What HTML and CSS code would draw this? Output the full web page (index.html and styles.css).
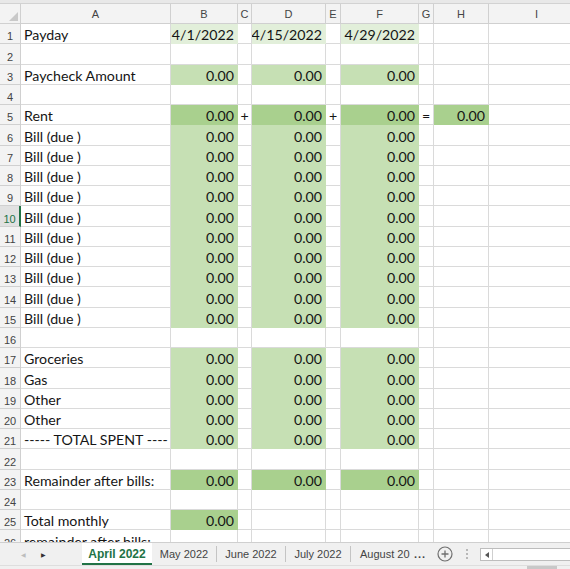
FILE: index.html
```html
<!DOCTYPE html>
<html>
<head>
<meta charset="utf-8">
<link rel="stylesheet" href="styles.css">
</head>
<body>
<div class="topstrip"></div>
<div class="sheet">
  <div class="hd corner"><svg width="9" height="9" viewBox="0 0 9 9"><polygon points="9,0 9,9 0,9" fill="#c9c9c9"/></svg></div>
  <div class="hd">A</div><div class="hd">B</div><div class="hd">C</div><div class="hd">D</div><div class="hd">E</div><div class="hd">F</div><div class="hd">G</div><div class="hd">H</div><div class="hd">I</div>

  <div class="rh">1</div><div class="c">Payday</div><div class="c lg r">4/1/2022</div><div class="c"></div><div class="c lg r">4/15/2022</div><div class="c"></div><div class="c lg r">4/29/2022</div><div class="c"></div><div class="c"></div><div class="c"></div>
  <div class="rh">2</div><div class="c"></div><div class="c"></div><div class="c"></div><div class="c"></div><div class="c"></div><div class="c"></div><div class="c"></div><div class="c"></div><div class="c"></div>
  <div class="rh">3</div><div class="c">Paycheck Amount</div><div class="c mg r">0.00</div><div class="c"></div><div class="c mg r">0.00</div><div class="c"></div><div class="c mg r">0.00</div><div class="c"></div><div class="c"></div><div class="c"></div>
  <div class="rh">4</div><div class="c"></div><div class="c"></div><div class="c"></div><div class="c"></div><div class="c"></div><div class="c"></div><div class="c"></div><div class="c"></div><div class="c"></div>
  <div class="rh">5</div><div class="c">Rent</div><div class="c dg r">0.00</div><div class="c op">+</div><div class="c dg r">0.00</div><div class="c op">+</div><div class="c dg r">0.00</div><div class="c op">=</div><div class="c dg r">0.00</div><div class="c"></div>
  <div class="rh">6</div><div class="c">Bill (due )</div><div class="c mg r">0.00</div><div class="c"></div><div class="c mg r">0.00</div><div class="c"></div><div class="c mg r">0.00</div><div class="c"></div><div class="c"></div><div class="c"></div>
  <div class="rh">7</div><div class="c">Bill (due )</div><div class="c mg r">0.00</div><div class="c"></div><div class="c mg r">0.00</div><div class="c"></div><div class="c mg r">0.00</div><div class="c"></div><div class="c"></div><div class="c"></div>
  <div class="rh">8</div><div class="c">Bill (due )</div><div class="c mg r">0.00</div><div class="c"></div><div class="c mg r">0.00</div><div class="c"></div><div class="c mg r">0.00</div><div class="c"></div><div class="c"></div><div class="c"></div>
  <div class="rh">9</div><div class="c">Bill (due )</div><div class="c mg r">0.00</div><div class="c"></div><div class="c mg r">0.00</div><div class="c"></div><div class="c mg r">0.00</div><div class="c"></div><div class="c"></div><div class="c"></div>
  <div class="rh active">10</div><div class="c">Bill (due )</div><div class="c mg r">0.00</div><div class="c"></div><div class="c mg r">0.00</div><div class="c"></div><div class="c mg r">0.00</div><div class="c"></div><div class="c"></div><div class="c"></div>
  <div class="rh">11</div><div class="c">Bill (due )</div><div class="c mg r">0.00</div><div class="c"></div><div class="c mg r">0.00</div><div class="c"></div><div class="c mg r">0.00</div><div class="c"></div><div class="c"></div><div class="c"></div>
  <div class="rh">12</div><div class="c">Bill (due )</div><div class="c mg r">0.00</div><div class="c"></div><div class="c mg r">0.00</div><div class="c"></div><div class="c mg r">0.00</div><div class="c"></div><div class="c"></div><div class="c"></div>
  <div class="rh">13</div><div class="c">Bill (due )</div><div class="c mg r">0.00</div><div class="c"></div><div class="c mg r">0.00</div><div class="c"></div><div class="c mg r">0.00</div><div class="c"></div><div class="c"></div><div class="c"></div>
  <div class="rh">14</div><div class="c">Bill (due )</div><div class="c mg r">0.00</div><div class="c"></div><div class="c mg r">0.00</div><div class="c"></div><div class="c mg r">0.00</div><div class="c"></div><div class="c"></div><div class="c"></div>
  <div class="rh">15</div><div class="c">Bill (due )</div><div class="c mg r">0.00</div><div class="c"></div><div class="c mg r">0.00</div><div class="c"></div><div class="c mg r">0.00</div><div class="c"></div><div class="c"></div><div class="c"></div>
  <div class="rh">16</div><div class="c"></div><div class="c"></div><div class="c"></div><div class="c"></div><div class="c"></div><div class="c"></div><div class="c"></div><div class="c"></div><div class="c"></div>
  <div class="rh">17</div><div class="c">Groceries</div><div class="c mg r">0.00</div><div class="c"></div><div class="c mg r">0.00</div><div class="c"></div><div class="c mg r">0.00</div><div class="c"></div><div class="c"></div><div class="c"></div>
  <div class="rh">18</div><div class="c">Gas</div><div class="c mg r">0.00</div><div class="c"></div><div class="c mg r">0.00</div><div class="c"></div><div class="c mg r">0.00</div><div class="c"></div><div class="c"></div><div class="c"></div>
  <div class="rh">19</div><div class="c">Other</div><div class="c mg r">0.00</div><div class="c"></div><div class="c mg r">0.00</div><div class="c"></div><div class="c mg r">0.00</div><div class="c"></div><div class="c"></div><div class="c"></div>
  <div class="rh">20</div><div class="c">Other</div><div class="c mg r">0.00</div><div class="c"></div><div class="c mg r">0.00</div><div class="c"></div><div class="c mg r">0.00</div><div class="c"></div><div class="c"></div><div class="c"></div>
  <div class="rh">21</div><div class="c">----- TOTAL SPENT ----</div><div class="c mg r">0.00</div><div class="c"></div><div class="c mg r">0.00</div><div class="c"></div><div class="c mg r">0.00</div><div class="c"></div><div class="c"></div><div class="c"></div>
  <div class="rh">22</div><div class="c"></div><div class="c"></div><div class="c"></div><div class="c"></div><div class="c"></div><div class="c"></div><div class="c"></div><div class="c"></div><div class="c"></div>
  <div class="rh">23</div><div class="c">Remainder after bills:</div><div class="c dg r">0.00</div><div class="c"></div><div class="c dg r">0.00</div><div class="c"></div><div class="c dg r">0.00</div><div class="c"></div><div class="c"></div><div class="c"></div>
  <div class="rh">24</div><div class="c"></div><div class="c"></div><div class="c"></div><div class="c"></div><div class="c"></div><div class="c"></div><div class="c"></div><div class="c"></div><div class="c"></div>
  <div class="rh">25</div><div class="c">Total monthly</div><div class="c dg r">0.00</div><div class="c"></div><div class="c"></div><div class="c"></div><div class="c"></div><div class="c"></div><div class="c"></div><div class="c"></div>
  <div class="rh">26</div><div class="c">remainder after bills:</div><div class="c"></div><div class="c"></div><div class="c"></div><div class="c"></div><div class="c"></div><div class="c"></div><div class="c"></div><div class="c"></div>
</div>
<div class="tabbar">
  <div class="nav"><span class="arrow dim">&#9664;</span><span class="arrow">&#9654;</span></div>
  <div class="tab activetab">April 2022</div>
  <div class="tab w65">May 2022</div>
  <div class="tab w69">June 2022</div>
  <div class="tab w65">July 2022</div>
  <div class="tab last">August 20</div>
  <div class="more">...</div>
  <div class="add"><svg width="16" height="16" viewBox="0 0 16 16"><circle cx="8" cy="8" r="7" fill="none" stroke="#6f6f6f" stroke-width="1.2"/><path d="M8 4.5v7M4.5 8h7" stroke="#6f6f6f" stroke-width="1.3"/></svg></div>
  <div class="vdots"><i></i><i></i><i></i></div>
  <div class="hscroll"><div class="sbtn"><svg width="4" height="6" viewBox="0 0 4 6"><polygon points="4,0 4,6 0,3" fill="#555"/></svg></div></div>
</div>
<div class="status"><div class="viewbtn"></div></div>
</body>
</html>
```

FILE: styles.css
```css
* { box-sizing: border-box; margin: 0; padding: 0; }
html, body { width: 570px; height: 569px; overflow: hidden; background: #fff; }
body { font-family: "Lato", "Liberation Sans", sans-serif; color: #151515; display: flex; flex-direction: column; }

.topstrip { height: 4px; background: #e8e8e8; border-bottom: 1px solid #d2d2d2; flex: none; }

.sheet {
  flex: 1;
  overflow: hidden;
  display: grid;
  grid-template-columns: 21px 150px 67px 14px 74px 15px 78px 15px 55px 96px;
  grid-template-rows: 20px;
  grid-auto-rows: 20.25px;
  align-content: start;
}
.sheet > div {
  border-right: 1px solid #dadada;
  border-bottom: 1px solid #dadada;
  white-space: nowrap;
  overflow: hidden;
}
.hd {
  background: #f3f3f3;
  border-color: #d0d0d0 !important;
  font-family: "Liberation Sans", sans-serif;
  font-size: 11px;
  color: #444;
  display: flex;
  align-items: center;
  justify-content: center;
  padding-top: 1px;
}
.corner { justify-content: flex-end; align-items: flex-end; padding: 0 2px 2px 0; }
.corner svg { display: block; }
.rh {
  background: #f3f3f3;
  border-color: #d0d0d0 !important;
  font-family: "Liberation Sans", sans-serif;
  font-size: 11px;
  color: #444;
  display: flex;
  align-items: flex-end;
  justify-content: center;
  padding-bottom: 1px;
}
.rh.active { color: #217346; background: #e1e1e1; border-right: 2px solid #217346 !important; }
.c {
  font-size: 14.2px;
  display: flex;
  align-items: flex-end;
  padding: 0 3px 0 3px;
  line-height: 17px;
}
.r { justify-content: flex-end; }
.op { justify-content: center; padding: 0; }
.lg { background: #e2efda; border-color: #e2efda !important; }
.mg { background: #c6e0b4; border-color: #c6e0b4 !important; }
.dg { background: #a9d08e; border-color: #a9d08e !important; }

.tabbar {
  flex: none;
  height: 23px;
  background: #f0f0f0;
  border-top: 1px solid #cfcfcf;
  display: flex;
  align-items: stretch;
  font-family: "Liberation Sans", sans-serif;
  font-size: 11px;
  color: #444;
}
.nav { width: 82px; display: flex; align-items: center; padding-left: 21px; gap: 15px; }
.arrow { font-size: 6px; color: #333; }
.arrow.dim { color: #bdbdbd; }
.tab { display: flex; align-items: center; justify-content: center; border-right: 1px solid #c4c4c4; margin: 3px 0; }
.activetab {
  width: 70px;
  margin: 0;
  background: #fff;
  color: #217346;
  font-weight: bold;
  font-size: 12px;
  border-right: none;
  border-bottom: 2px solid #217346;
  padding-top: 2px;
}
.w65 { width: 65px; }
.w69 { width: 69px; }
.last { width: 63px; border-right: none; padding-left: 9px; justify-content: flex-start; }
.more { width: 20px; display: flex; align-items: center; font-weight: bold; color: #444; letter-spacing: 1px; }
.add { width: 22px; display: flex; align-items: center; justify-content: center; }
.add svg { display: block; }
.vdots { width: 22px; display: flex; flex-direction: column; align-items: center; justify-content: center; gap: 2px; }
.vdots i { width: 2px; height: 2px; background: #b8b8b8; display: block; }
.hscroll { flex: 1; margin: 5px 0 4px 2px; background: #fff; border: 1px solid #bdbdbd; border-right: none; display: flex; }
.sbtn { width: 12px; border-right: 1px solid #cfcfcf; display: flex; align-items: center; justify-content: center; }
.sbtn svg { display: block; }

.status { flex: none; height: 4px; background: #f0f0f0; border-top: 1px solid #dedede; position: relative; }
.viewbtn { position: absolute; left: 527px; top: 0; width: 30px; height: 4px; background: #c8c8c8; }
```
